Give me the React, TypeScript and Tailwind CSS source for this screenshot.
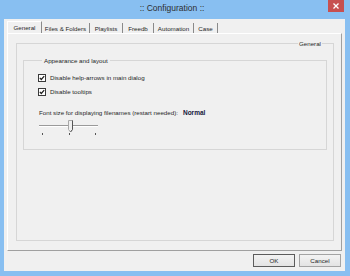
import { ReactNode } from 'react';

function Check() {
  return (
    <svg width="8" height="8" viewBox="0 0 8 8" className="shrink-0">
      <rect x="0.5" y="0.5" width="7" height="7" fill="#ffffff" stroke="#3a3a3a" />
      <path d="M1.8 3.8 L3.3 5.5 L6.2 2.1" fill="none" stroke="#1e1e1e" strokeWidth="1.2" />
    </svg>
  );
}

function Slider() {
  // track, thumb pointing down, three ticks
  return (
    <svg width="62" height="17" viewBox="0 0 62 17">
      <line x1="1" y1="6.5" x2="60" y2="6.5" stroke="#9a9a9a" />
      <line x1="1" y1="7.5" x2="60" y2="7.5" stroke="#ffffff" />
      <path d="M30.5 1.5 H34.5 V10.5 L32.5 13 L30.5 10.5 Z" fill="#f0f0f0" stroke="#a8a8a8" />
      <path d="M34.5 1.5 V10.5 L32.5 13" fill="none" stroke="#555555" />
      <rect x="4" y="14" width="1" height="2" fill="#555" />
      <rect x="31" y="14" width="1" height="2" fill="#555" />
      <rect x="57" y="14" width="1" height="2" fill="#555" />
    </svg>
  );
}

function Tab({ label, width, active }: { label: string; width: string; active?: boolean }) {
  return (
    <div
      className={`${width} flex items-center justify-center border-r border-r-[#8a8a8a] ${
        active ? 'h-[12px] border-l border-t border-l-white border-t-white' : 'h-[10px] mt-[2px]'
      }`}
    >
      {label}
    </div>
  );
}

function Button({ children, main }: { children: ReactNode; main?: boolean }) {
  return (
    <button
      className={`w-[42px] h-[13px] flex items-center justify-center bg-gradient-to-b from-[#f3f3f3] to-[#e3e3e3] border ${
        main ? 'border-[#5c5c5c]' : 'border-[#a3a3a3]'
      }`}
    >
      {children}
    </button>
  );
}

export default function App() {
  return (
    <div className="w-[350px] h-[276px] bg-[#88bff1] flex flex-col font-['Liberation_Sans',Arial,sans-serif] text-[6.2px] leading-[7px] text-[#262626]">
      <div className="h-[19px] flex items-start">
        <div className="flex-1" />
        <div className="pt-[3px] text-[8.5px] leading-[11px] text-[#2e2e2e]">:: Configuration ::</div>
        <div className="flex-1 flex justify-end pr-[6px]">
          <div className="w-[16px] h-[12px] bg-[#c75050] flex items-center justify-center">
            <svg width="6" height="6" viewBox="0 0 6 6">
              <path d="M0.5 0.5 L5.5 5.5 M5.5 0.5 L0.5 5.5" stroke="#ffffff" strokeWidth="1.3" />
            </svg>
          </div>
        </div>
      </div>

      <div className="flex-1 ml-[4px] mr-[5px] mb-[5px] bg-[#f0f0f0] flex flex-col">
        <div className="flex items-start pl-[3px] pt-[2px] h-[14px]">
          <Tab label="General" width="w-[35px]" active />
          <Tab label="Files & Folders" width="w-[48px]" />
          <Tab label="Playlists" width="w-[33px]" />
          <Tab label="Freedb" width="w-[31px]" />
          <Tab label="Automation" width="w-[40px]" />
          <Tab label="Case" width="w-[24px]" />
        </div>

        <div className="h-[218px] mx-[3px] border border-t-white border-l-white border-r-[#a0a0a0] border-b-[#a0a0a0] flex flex-col">
          <fieldset className="flex-1 ml-[8px] mr-[7px] mt-[6px] mb-[9px] border border-[#d6d6d6] px-[6px] flex flex-col">
            <legend className="ml-auto mr-[5px] px-[1px] leading-[7px]">General</legend>
            <fieldset className="mt-[10px] border border-[#d6d6d6] pl-[14px] pb-[13px] flex flex-col">
              <legend className="ml-[4px] px-[2px] leading-[7px]">Appearance and layout</legend>
              <div className="mt-[9px] flex items-center gap-[4px] h-[9px]">
                <Check />
                <span>Disable help-arrows in main dialog</span>
              </div>
              <div className="mt-[5px] flex items-center gap-[4px] h-[9px]">
                <Check />
                <span>Disable tooltips</span>
              </div>
              <div className="mt-[12px] pl-[1px] flex items-center gap-[5px] h-[9px]">
                <span>Font size for displaying filenames (restart needed):</span>
                <span className="font-bold text-[6.5px] text-[#15153a]">Normal</span>
              </div>
              <div className="mt-[2px]">
                <Slider />
              </div>
            </fieldset>
          </fieldset>
        </div>

        <div className="flex justify-end gap-[4px] pt-[3px] pr-[4px]">
          <Button main>OK</Button>
          <Button>Cancel</Button>
        </div>
      </div>
    </div>
  );
}
